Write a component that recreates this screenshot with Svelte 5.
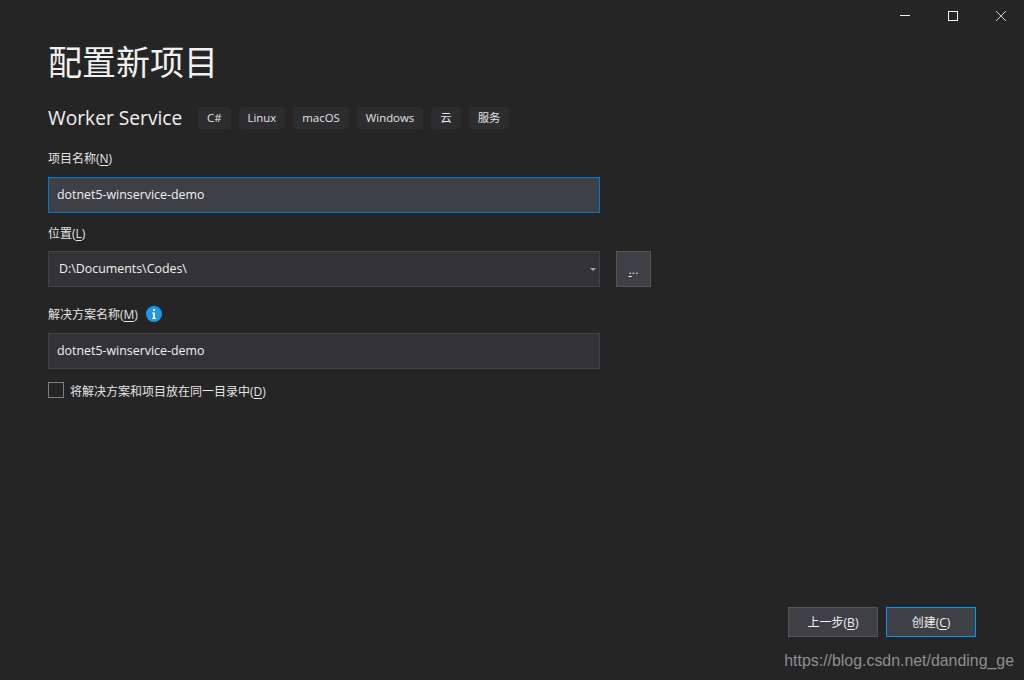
<script lang="ts">
	const tags = ['C#', 'Linux', 'macOS', 'Windows', '云', '服务'];
	const projectName = 'dotnet5-winservice-demo';
</script>

<main class="page">
	<header class="titlebar">
		<button class="win-btn" aria-label="最小化">
			<svg width="12" height="12" viewBox="0 0 12 12"><path d="M2 5.5h10" stroke="#f1f1f1" /></svg>
		</button>
		<button class="win-btn" aria-label="最大化">
			<svg width="12" height="12" viewBox="0 0 12 12"><rect x="2.5" y="1.5" width="9" height="9" fill="none" stroke="#f1f1f1" /></svg>
		</button>
		<button class="win-btn" aria-label="关闭">
			<svg width="12" height="12" viewBox="0 0 12 12"><path d="M2 1l10 10M12 1L2 11" stroke="#d0d0d0" /></svg>
		</button>
	</header>

	<section class="content">
		<h1 class="title">配置新项目</h1>

		<div class="template">
			<span class="template-name">Worker Service</span>
			<ul class="tags">
				{#each tags as tag}
					<li class="tag">{tag}</li>
				{/each}
			</ul>
		</div>

		<label class="label first" for="project">项目名称(<u>N</u>)</label>
		<input id="project" class="field focused" type="text" value={projectName} />

		<label class="label second" for="location">位置(<u>L</u>)</label>
		<div class="location-row">
			<div id="location" class="field select">
				<span>D:\Documents\Codes\</span>
				<svg class="caret" width="6" height="3" viewBox="0 0 6 3"><path d="M0 0h6L3 3z" fill="#a8a8a8" /></svg>
			</div>
			<button class="browse"><span class="dots"><u>.</u>..</span></button>
		</div>

		<div class="label third">
			<label for="solution">解决方案名称(<u>M</u>)</label>
			<svg class="info" width="16" height="16" viewBox="0 0 16 16">
				<circle cx="8" cy="8" r="8" fill="#1c97ea" />
				<rect x="7" y="3" width="2" height="2" fill="#fff" />
				<path d="M6 6.5h3v5.5h1v1H6v-1h1V7.5H6z" fill="#fff" />
			</svg>
		</div>
		<input id="solution" class="field" type="text" value={projectName} />

		<div class="check-row">
			<span class="checkbox"></span>
			<span class="check-text">将解决方案和项目放在同一目录中(<u>D</u>)</span>
		</div>
	</section>

	<footer class="actions">
		<button class="action">上一步(<u>B</u>)</button>
		<button class="action primary">创建(<u>C</u>)</button>
	</footer>

	<span class="watermark">https://blog.csdn.net/danding_ge</span>
</main>

<style>
	:global(body) {
		margin: 0;
		background: #252526;
	}

	.page {
		position: relative;
		display: flex;
		flex-direction: column;
		width: 1024px;
		height: 680px;
		overflow: hidden;
		background: #252526;
		color: #f1f1f1;
		font-family: 'Open Sans', 'Noto Sans CJK SC', sans-serif;
		font-size: 12px;
	}

	.titlebar {
		display: flex;
		justify-content: flex-end;
		height: 32px;
	}

	.win-btn {
		display: flex;
		align-items: center;
		justify-content: center;
		width: 48px;
		height: 32px;
		padding: 0;
		border: 0;
		background: none;
	}

	.content {
		display: flex;
		flex-direction: column;
		align-items: flex-start;
		padding-left: 48px;
	}

	.title {
		margin: 4px 0 0;
		font-family: 'Noto Sans CJK SC', sans-serif;
		font-size: 34px;
		font-weight: 400;
		line-height: 50px;
		color: #f1f1f1;
	}

	.template {
		display: flex;
		align-items: center;
		height: 22px;
		margin-top: 21px;
	}

	.template-name {
		width: 150px;
		font-family: 'Open Sans', sans-serif;
		font-size: 19.2px;
		line-height: 22px;
	}

	.tags {
		display: flex;
		gap: 8px;
		margin: 0;
		padding: 0;
		list-style: none;
	}

	.tag {
		display: flex;
		align-items: center;
		height: 22px;
		padding: 0 9px;
		border-radius: 4px;
		background: #2d2d30;
		font-size: 11.4px;
		line-height: 20px;
		padding-bottom: 1px;
		box-sizing: border-box;
		color: #e4e4e4;
	}

	.label {
		display: flex;
		align-items: center;
		height: 18px;
		font-size: 12px;
		color: #e4e4e4;
	}

	.first {
		margin-top: 20px;
	}

	.second {
		margin-top: 11px;
	}

	.third {
		gap: 8px;
		margin-top: 18px;
	}

	.label u,
	.check-text u,
	.action u {
		text-underline-offset: 2px;
	}

	.field {
		box-sizing: border-box;
		width: 552px;
		height: 36px;
		margin-top: 10px;
		padding: 0 8px 2px;
		border: 1px solid #434346;
		background: #333337;
		color: #f1f1f1;
		font-family: inherit;
		font-size: 12.4px;
		outline: none;
	}

	.focused {
		border-color: #007acc;
		background: #3f3f46;
	}

	.location-row {
		display: flex;
		gap: 16px;
		margin-top: 9px;
	}

	.select {
		display: flex;
		align-items: center;
		justify-content: space-between;
		margin-top: 0;
		padding: 0 3px 2px 10px;
	}

	.caret {
		position: relative;
		top: 1px;
	}

	.browse {
		box-sizing: border-box;
		width: 35px;
		height: 36px;
		padding: 0;
		border: 1px solid #555558;
		background: #3f3f46;
		color: #f1f1f1;
		font-size: 12px;
	}

	.dots {
		position: relative;
		top: 1px;
		text-underline-offset: 2px;
	}

	.check-row {
		display: flex;
		align-items: center;
		gap: 6px;
		margin-top: 12px;
	}

	.checkbox {
		box-sizing: border-box;
		width: 16px;
		height: 16px;
		border: 1px solid #808080;
		background: #252526;
	}

	.check-text {
		position: relative;
		top: 1px;
		color: #e4e4e4;
	}

	.actions {
		display: flex;
		justify-content: flex-end;
		gap: 8px;
		margin-top: auto;
		padding: 0 48px 43px 0;
	}

	.action {
		box-sizing: border-box;
		width: 90px;
		height: 30px;
		padding: 0;
		border: 1px solid #555558;
		background: #3f3f46;
		color: #f1f1f1;
		font-family: inherit;
		font-size: 12px;
	}

	.primary {
		border-color: #0097fb;
	}

	.watermark {
		position: absolute;
		right: 10px;
		bottom: 9px;
		font-family: 'Liberation Sans', sans-serif;
		font-size: 15.9px;
		line-height: 20px;
		color: #8f8f8f;
	}
</style>
